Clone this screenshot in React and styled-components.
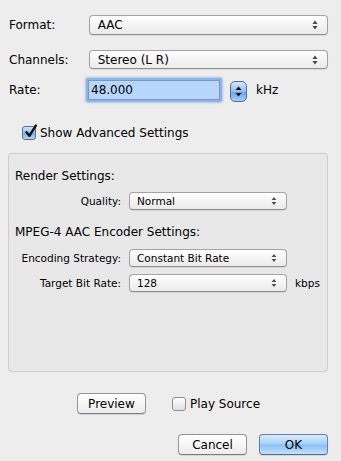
import React from 'react';
import styled, { createGlobalStyle } from 'styled-components';

const GlobalStyle = createGlobalStyle`
  html, body {
    margin: 0;
    padding: 0;
    background: #ededed;
  }
  body {
    font-family: "DejaVu Sans", "Liberation Sans", sans-serif;
    color: #000;
  }
`;

const Window = styled.div`
  width: 341px;
  height: 461px;
  box-sizing: border-box;
  padding: 15px 13px 0 8px;
  background: #ededed;
  font-size: 12px;
`;

const FieldRow = styled.div`
  display: flex;
  align-items: center;
  margin-top: ${(p) => p.$gap || 0}px;
  height: ${(p) => p.$h || 20}px;
`;

const Label = styled.div`
  width: 80px;
  padding-left: 1px;
  font-size: 12px;
  line-height: 16px;
`;

const Popup = styled.div`
  position: relative;
  box-sizing: border-box;
  width: ${(p) => p.$w}px;
  height: ${(p) => p.$h}px;
  border: 1px solid #a3a3a3;
  border-bottom-color: #8e8e8e;
  border-radius: 4px;
  background: linear-gradient(#ffffff, #f4f4f4 50%, #ebebeb);
  box-shadow: 0 1px 1px rgba(0, 0, 0, 0.08);
  display: flex;
  align-items: center;
  padding-left: ${(p) => (p.$small ? 7 : 8)}px;
  font-size: ${(p) => (p.$small ? 10.5 : 12)}px;
`;

const PopArrows = styled.svg`
  position: absolute;
  right: 9px;
  top: 50%;
  transform: translateY(-50%);
`;

const Arrows = ({ small }) => (
  <PopArrows width="6" height={small ? 9 : 10} viewBox="0 0 6 10">
    <path d="M3 0.5 L5.6 4 L0.4 4 Z" fill="#4a4a4a" />
    <path d="M3 9.5 L5.6 6 L0.4 6 Z" fill="#4a4a4a" />
  </PopArrows>
);

const RateField = styled.div`
  box-sizing: border-box;
  width: 132px;
  height: 20px;
  margin-left: -1px;
  border: 1px solid #7f96b9;
  background: #b7d6fb;
  box-shadow: 0 0 0 2px #8cb4e6, 0 0 2px 3px rgba(110, 160, 220, 0.5);
  border-radius: 1px;
  padding-left: 2px;
  display: flex;
  align-items: center;
  font-size: 12px;
`;

const Stepper = styled.div`
  box-sizing: border-box;
  width: 17px;
  height: 21px;
  margin-left: 10px;
  margin-top: 2px;
  border: 1px solid #4f6e99;
  border-radius: 5px;
  background: linear-gradient(#d8e9fb, #8fbdf0 50%, #6aa6ea 55%, #a6d0f7);
  display: flex;
  align-items: center;
  justify-content: center;
`;

const Unit = styled.span`
  margin-left: ${(p) => p.$ml ?? 9}px;
  font-size: ${(p) => (p.$small ? 10.5 : 12)}px;
`;

const CheckRow = styled.label`
  display: flex;
  align-items: center;
  gap: 4px;
  margin-top: ${(p) => p.$gap || 0}px;
  margin-left: ${(p) => p.$ml || 0}px;
  font-size: 12px;
  line-height: 16px;
`;

const Box = styled.span`
  box-sizing: border-box;
  width: 14px;
  height: 14px;
  border: 1px solid ${(p) => (p.$checked ? '#5d6f8d' : '#8f8f8f')};
  border-radius: 3px;
  background: ${(p) =>
    p.$checked
      ? 'linear-gradient(#cfe3f9, #92bff0 50%, #7fb2ec 55%, #b5d8f8)'
      : 'linear-gradient(#ffffff, #f0f0f0 50%, #e2e2e2)'};
  position: relative;
  display: inline-block;
`;

const CheckMark = styled.svg`
  position: absolute;
  left: 1px;
  top: -3px;
`;

const Checkbox = ({ checked }) => (
  <Box $checked={checked}>
    {checked && (
      <CheckMark width="14" height="15" viewBox="0 0 14 15">
        <path d="M2.5 8.2 L5.4 11.8 L11.8 1.6" fill="none" stroke="#111" strokeWidth="2.4" strokeLinecap="round" strokeLinejoin="round" />
      </CheckMark>
    )}
  </Box>
);

const Group = styled.div`
  box-sizing: border-box;
  margin-top: 12px;
  width: 320px;
  height: 219px;
  border: 1px solid #cdcdcd;
  border-radius: 4px;
  background: #e8e8e8;
  padding: 0 6px;
`;

const Heading = styled.div`
  font-size: 12px;
  line-height: 16px;
  margin-top: ${(p) => p.$gap}px;
`;

const SubRow = styled.div`
  display: grid;
  grid-template-columns: 106px 158px auto;
  column-gap: 8px;
  align-items: center;
  height: 18px;
  margin-top: ${(p) => p.$gap}px;
`;

const SubLabel = styled.div`
  text-align: right;
  font-size: 10.5px;
`;

const PreviewRow = styled.div`
  display: flex;
  align-items: center;
  justify-content: center;
  gap: 26px;
  margin-top: 21px;
  height: 21px;
  padding-left: 1px;
`;

const Button = styled.div`
  box-sizing: border-box;
  width: 69px;
  height: 21px;
  border: 1px solid ${(p) => (p.$primary ? '#6b7fa8' : '#959595')};
  border-bottom-color: ${(p) => (p.$primary ? '#55688f' : '#7c7c7c')};
  border-radius: 4px;
  background: ${(p) =>
    p.$primary
      ? 'linear-gradient(#d9ebfc, #a9d1f8 45%, #8cc1f4 55%, #c3e2fb)'
      : 'linear-gradient(#ffffff, #f6f6f6 50%, #ececec)'};
  box-shadow: 0 1px 1px rgba(0, 0, 0, 0.1);
  display: flex;
  align-items: center;
  justify-content: center;
  font-size: 12px;
`;

const ButtonRow = styled.div`
  display: flex;
  justify-content: flex-end;
  gap: 12px;
  margin-top: 20px;
`;

export default function App() {
  return (
    <>
      <GlobalStyle />
      <Window>
        <FieldRow>
          <Label>Format:</Label>
          <Popup $w={240} $h={20}>
            AAC
            <Arrows />
          </Popup>
        </FieldRow>
        <FieldRow $gap={15} $h={19}>
          <Label>Channels:</Label>
          <Popup $w={240} $h={19}>
            Stereo (L R)
            <Arrows />
          </Popup>
        </FieldRow>
        <FieldRow $gap={11}>
          <Label>Rate:</Label>
          <RateField>48.000</RateField>
          <Stepper>
            <svg width="7" height="11" viewBox="0 0 7 11">
              <path d="M3.5 0.5 L6.5 4 L0.5 4 Z" fill="#111" />
              <path d="M3.5 10.5 L6.5 7 L0.5 7 Z" fill="#111" />
            </svg>
          </Stepper>
          <Unit>kHz</Unit>
        </FieldRow>

        <CheckRow $gap={25} $ml={14}>
          <Checkbox checked />
          Show Advanced Settings
        </CheckRow>

        <Group>
          <Heading $gap={14}>Render Settings:</Heading>
          <SubRow $gap={8}>
            <SubLabel>Quality:</SubLabel>
            <Popup $w={158} $h={18} $small>
              Normal
              <Arrows small />
            </Popup>
          </SubRow>
          <Heading $gap={14}>MPEG-4 AAC Encoder Settings:</Heading>
          <SubRow $gap={9}>
            <SubLabel>Encoding Strategy:</SubLabel>
            <Popup $w={158} $h={18} $small>
              Constant Bit Rate
              <Arrows small />
            </Popup>
          </SubRow>
          <SubRow $gap={7}>
            <SubLabel>Target Bit Rate:</SubLabel>
            <Popup $w={158} $h={18} $small>
              128
              <Arrows small />
            </Popup>
            <Unit $small $ml={0}>kbps</Unit>
          </SubRow>
        </Group>

        <PreviewRow>
          <Button>Preview</Button>
          <CheckRow>
            <Checkbox />
            Play Source
          </CheckRow>
        </PreviewRow>

        <ButtonRow>
          <Button>Cancel</Button>
          <Button $primary>OK</Button>
        </ButtonRow>
      </Window>
    </>
  );
}
